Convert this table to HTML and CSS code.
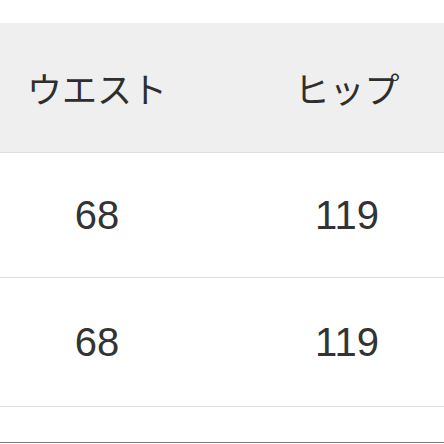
FILE: index.html
```html
<!DOCTYPE html>
<html lang="ja">
<head>
<meta charset="utf-8">
<link rel="stylesheet" href="styles.css">
</head>
<body>
<div class="page">
  <div class="table">
    <div class="row head">
      <div class="cell jp">ウエスト</div>
      <div class="cell jp">ヒップ</div>
    </div>
    <div class="row r1">
      <div class="cell">68</div>
      <div class="cell">119</div>
    </div>
    <div class="row r2">
      <div class="cell">68</div>
      <div class="cell">119</div>
    </div>
    <div class="row r3"></div>
  </div>
</div>
</body>
</html>
```
FILE: styles.css
```css
html, body {
  margin: 0;
  padding: 0;
  background: #ffffff;
  overflow: hidden;
}
.page {
  width: 444px;
  height: 444px;
  overflow: hidden;
  padding-top: 23px;
  box-sizing: border-box;
}
.table {
  width: 500px;
  display: flex;
  flex-direction: column;
}
.row {
  display: grid;
  grid-template-columns: 194px 306px;
  align-items: center;
  border-bottom: 1px solid #dedede;
}
.head {
  background: #efefef;
  height: 129px;
}
.r1 { height: 124px; }
.r2 { height: 128px; }
.r3 {
  height: 35px;
  border-bottom: 1px solid #7a7a7a;
}
.cell {
  text-align: center;
  color: #333333;
  font-family: "Liberation Sans", Arial, sans-serif;
  font-size: 40px;
  line-height: 1;
}
.jp {
  font-family: "Noto Sans CJK JP", sans-serif;
  font-size: 35px;
  font-weight: 400;
  color: #2e2e2e;
}
```
